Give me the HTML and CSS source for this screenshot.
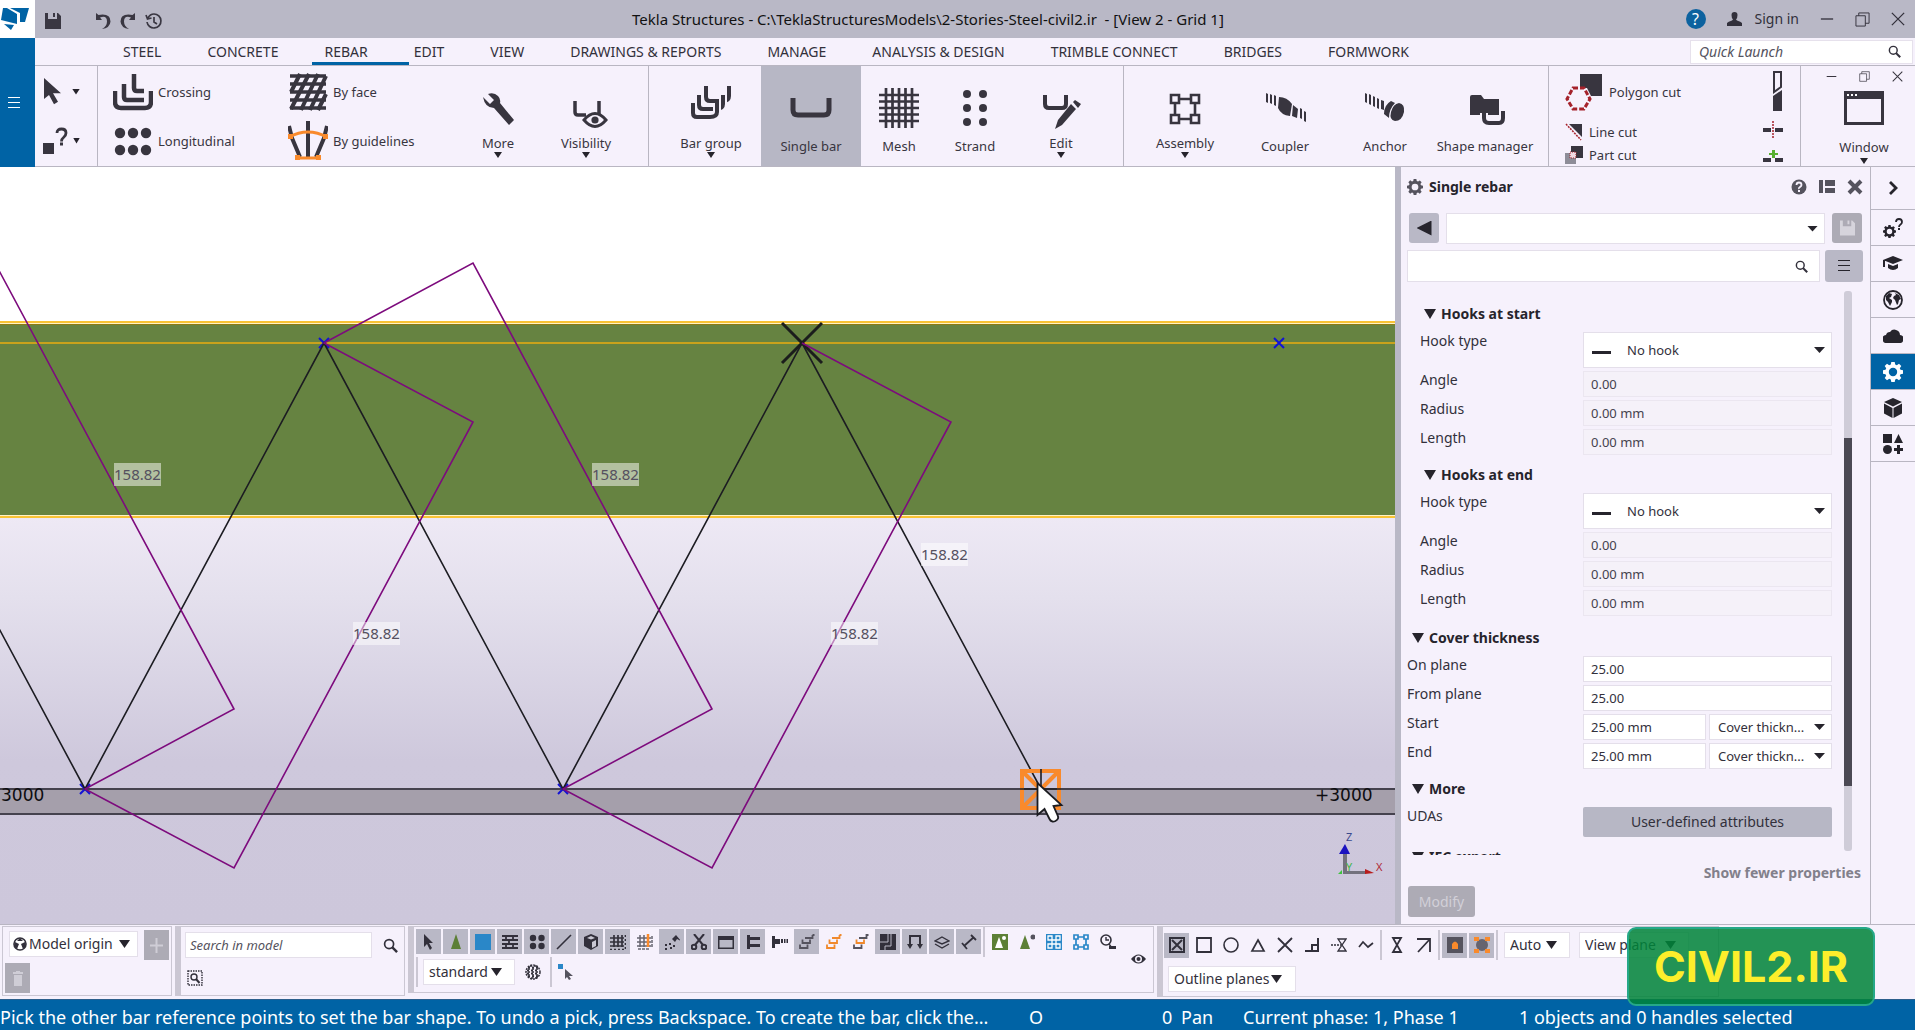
FILE: index.html
```html
<!DOCTYPE html>
<html lang="en">
<head>
<meta charset="utf-8">
<title>Tekla Structures</title>
<link rel="stylesheet" href="styles.css">
</head>
<body>
<svg class="sprite" aria-hidden="true">
  <symbol id="i-floppy" viewBox="0 0 16 16"><path d="M0 0h3v6h9V0h1l3 3v13H0zM8 0h2v4H8z"/></symbol>
  <symbol id="i-search" viewBox="0 0 16 16"><circle cx="6.500" cy="6.500" r="4.800" fill="none" stroke="currentColor" stroke-width="1.800"/><path d="M10 10l5 5" stroke="currentColor" stroke-width="2.600"/></symbol>
  <symbol id="i-cursor" viewBox="0 0 20 32"><path d="M1 0l17 18h-8l5 10-4 3-5-11-5 5z"/></symbol>
  <symbol id="i-restore" viewBox="0 0 16 16"><path d="M1 4h10v11H1zM4 4V1h11v11h-4" fill="none" stroke="currentColor"/></symbol>
  <symbol id="i-close" viewBox="0 0 16 16"><path d="M1 1l14 14M15 1L1 15" fill="none" stroke="currentColor" stroke-width="1.500"/></symbol>
  <symbol id="i-min" viewBox="0 0 16 16"><path d="M1 8h14" stroke="currentColor" stroke-width="1.500"/></symbol>
  <symbol id="i-gear" viewBox="0 0 20 20"><path fill-rule="evenodd" d="M8.300 0h3.400l.5 2.500 1.600.7L16 1.800 18.300 4l-1.500 2.200.7 1.600 2.500.5v3.400l-2.500.5-.7 1.600 1.500 2.200-2.300 2.300-2.200-1.500-1.600.7-.5 2.500H8.300l-.5-2.500-1.600-.7L4 18.300 1.700 16l1.500-2.200-.7-1.600-2.500-.5V8.300l2.500-.5.7-1.600L1.700 4 4 1.700l2.200 1.500 1.600-.7zM10 5.800a4.200 4.200 0 100 8.400 4.200 4.200 0 000-8.400z"/></symbol>
  <symbol id="i-hooks" viewBox="0 0 16 16"><path d="M6 4h7.500V1M3.500 5.500V9H11V5.500M1 10.500V14h7.500v-3.500M15.500 1h-2" fill="none" stroke="currentColor" stroke-width="1.800"/></symbol>
</svg>

<header class="titlebar">
  <div class="logo"><svg width="35" height="38" viewBox="0 0 35 38"><path d="M3 8h4l10 6v10L1 20zM10 8h19l-4 14h-5V13zM4 24l10 1-3 5z" fill="#0063a5"/></svg></div>
  <div class="quick">
    <button aria-label="Save"><svg width="16" height="16"><use href="#i-floppy"/></svg></button>
    <button class="undo" aria-label="Undo"><svg width="16" height="18" viewBox="0 0 16 18"><path d="M1 1v7h6L5 5.500Q12 3 12 9.500 12 14 7 17q8-1 8.500-7.500Q15.500 1 3.500 3z"/></svg></button>
    <button aria-label="Redo"><svg width="16" height="18" viewBox="0 0 16 18"><path d="M15 1v7H9l2-2.500Q4 3 4 9.500 4 14 9 17 1 16 .5 9.500.5 1 12.500 3z"/></svg></button>
    <button aria-label="History"><svg width="18" height="18" viewBox="0 0 18 18" fill="none" stroke="currentColor" stroke-width="1.700"><path d="M2 10A7 7 0 109 2Q5 2 3 6M9 5v5l3 2M1 3l1.500 4 4-1"/></svg></button>
  </div>
  <h1>Tekla Structures - C:\TeklaStructuresModels\2-Stories-Steel-civil2.ir &nbsp;- [View 2 - Grid 1]</h1>
  <div class="account">
    <button class="help" aria-label="Help">?</button>
    <a href="#signin"><svg width="15" height="14" viewBox="0 0 15 14"><path d="M4.500 3a3 3 0 016 0q0 3-1.500 4.500l1 1q4 1 5 2.500v3H0v-3q1-1.500 5-2.500l1-1Q4.500 6 4.500 3z"/></svg>Sign in</a>
    <button aria-label="Minimize"><svg width="14" height="14"><use href="#i-min"/></svg></button>
    <button aria-label="Restore"><svg width="15" height="15"><use href="#i-restore"/></svg></button>
    <button aria-label="Close"><svg width="14" height="14"><use href="#i-close"/></svg></button>
  </div>
</header>

<div class="top">
  <button class="appmenu" aria-label="Menu"><span class="bars"></span></button>
  <nav class="tabs">
    <a href="#steel">STEEL</a><a href="#concrete">CONCRETE</a><a href="#rebar" class="current">REBAR</a><a href="#edit">EDIT</a><a href="#view">VIEW</a><a href="#drawings">DRAWINGS &amp; REPORTS</a><a href="#manage">MANAGE</a><a href="#analysis">ANALYSIS &amp; DESIGN</a><a href="#trimble">TRIMBLE CONNECT</a><a href="#bridges">BRIDGES</a><a href="#formwork">FORMWORK</a>
    <label class="launch"><input type="text" placeholder="Quick Launch" aria-label="Quick Launch"><svg width="13" height="13"><use href="#i-search"/></svg></label>
  </nav>
  <div class="ribbon">
    <section class="tools">
      <button aria-label="Select"><svg width="20" height="27" viewBox="0 0 20 32" preserveAspectRatio="none"><use href="#i-cursor"/></svg><i class="tri"></i></button>
      <button aria-label="Inquire"><svg width="26" height="27" viewBox="0 0 26 27"><path d="M0 16h11v11H0z"/><path d="M14 6q0-4 4.500-4T23 6q0 2.500-2.500 4.500-2 1.500-2 4" fill="none" stroke="currentColor" stroke-width="2.800"/><path d="M17 15.500h3v3h-3z"/></svg><i class="tri"></i></button>
    </section>
    <section class="sets">
      <div class="wide-col">
        <button class="wide"><svg width="40" height="40" viewBox="0 0 40 40" fill="none" stroke="currentColor" stroke-width="4.500"><path d="M2 19v11q0 6 6 6h24q6 0 6-6V19"/><path d="M11 12v13q0 3 3 3h17"/><path d="M21 2v14q0 3 3 3h7"/></svg>Crossing</button>
        <button class="wide"><svg width="40" height="40" viewBox="0 0 40 40"><circle cx="7" cy="12" r="5.200"/><circle cx="20" cy="12" r="5.200"/><circle cx="33" cy="12" r="5.200"/><circle cx="7" cy="29" r="5.200"/><circle cx="20" cy="29" r="5.200"/><circle cx="33" cy="29" r="5.200"/></svg>Longitudinal</button>
      </div>
      <div class="wide-col">
        <button class="wide"><svg width="40" height="40" viewBox="0 0 40 40" fill="none" stroke="currentColor" stroke-width="3.600"><path d="M2 4h36M2 12h36M2 20h36M2 28h36M2 36h36"/><path d="M12 2L3 20M21 2L3 37M30 2L13 38M38 4L22 38M38 22l-8 16" stroke-width="4"/></svg>By face</button>
        <button class="wide"><svg width="40" height="40" viewBox="0 0 40 40" fill="none"><path d="M20 0v38M1 5l3 12 8 19M39 5l-3 12-8 19" stroke="currentColor" stroke-width="4"/><path d="M1 16q19-10 38 0M8 37h24" stroke="#f98a2c" stroke-width="3"/><path d="M0 13h5v5H0zM35 13h5v5h-5zM7 34h5v5H7zM28 34h5v5h-5z" fill="#f98a2c"/></svg>By guidelines</button>
      </div>
      <button class="big arrow"><svg viewBox="0 0 44 44"><path d="M7 11l7 7 4-4-6-6q6-2 10 2 3 3 2 7l14 17-5 5-15-17q-9 0-11-11z"/></svg>More<i class="tri"></i></button>
      <button class="big arrow"><svg viewBox="0 0 44 44"><path d="M11 15v11q0 3 3 3h8M35 15v14" fill="none" stroke="currentColor" stroke-width="3.500"/><path d="M20 34q11-13 22 0-11 13-22 0z" fill="#f6f1fc" stroke="currentColor" stroke-width="3"/><circle cx="31" cy="34" r="3.600"/></svg>Visibility<i class="tri"></i></button>
    </section>
    <section class="bars-group">
      <button class="big arrow"><svg viewBox="0 0 44 44" fill="none"><path d="M17 0v11q0 4 4 4h13q6 0 6-5V0" stroke="currentColor" stroke-width="4"/><path d="M10 9v10q0 4 4 4h13q7 0 7-5V9" stroke="#f6f1fc" stroke-width="8"/><path d="M10 9v10q0 4 4 4h13q7 0 7-5V9" stroke="currentColor" stroke-width="4"/><path d="M4 17v10q0 4 4 4h13q7 0 7-5v-9" stroke="#f6f1fc" stroke-width="8"/><path d="M4 17v10q0 4 4 4h13q7 0 7-5v-9" stroke="currentColor" stroke-width="4"/></svg>Bar group<i class="tri"></i></button>
      <button class="big pressed"><svg viewBox="0 0 44 44"><path d="M4 12v12q0 5 5 5h26q5 0 5-5V12" fill="none" stroke="currentColor" stroke-width="5"/></svg>Single bar</button>
      <button class="big narrow"><svg viewBox="0 0 44 44" fill="none" stroke="currentColor" stroke-width="2.700"><path d="M9 2v40M15.500 2v40M22 2v40M28.500 2v40M35 2v40M2 9h40M2 15.500h40M2 22h40M2 28.500h40M2 35h40"/></svg>Mesh</button>
      <button class="big narrow"><svg viewBox="0 0 44 44"><circle cx="14" cy="8" r="4"/><circle cx="30" cy="8" r="4"/><circle cx="14" cy="22" r="4"/><circle cx="30" cy="22" r="4"/><circle cx="14" cy="36" r="4"/><circle cx="30" cy="36" r="4"/></svg>Strand</button>
      <button class="big arrow"><svg viewBox="0 0 44 44"><path d="M6 9v9q0 4 4 4h13q4 0 4-4V9" fill="none" stroke="currentColor" stroke-width="4"/><path d="M32 18l5 5-14 16-7 4 3-9zM34 16l2-2 6 4-3 4z"/></svg>Edit<i class="tri"></i></button>
    </section>
    <section class="detail">
      <button class="big arrow"><svg viewBox="0 0 44 44" fill="none" stroke="currentColor" stroke-width="2.600"><path d="M8 9h8v8H8zM28 9h8v8h-8zM8 29h8v8H8zM28 29h8v8h-8zM16 13h12M16 33h12M12 17v12M32 17v12"/></svg>Assembly<i class="tri"></i></button>
      <button class="big"><svg viewBox="0 0 44 44"><path d="M3 7l2 1v9l-2-1zM7 8l2 1v9l-2-1zM11 9l2 1v10l-2-1zM16 11q8 0 13 7l-2 12q-9-1-12-8zM30 19l5 4-1 9-5-2zM37 22l2 1v10l-2-1zM41 25l2 1v10l-2-1z"/></svg>Coupler</button>
      <button class="big"><svg viewBox="0 0 44 44"><path d="M2 7l2 1v9l-2-1zM6 8l2 1v10l-2-1zM10 10l2 1v10l-2-1zM14 12l2 1v10l-2-1zM18 14l3 1v9l-3-1zM28 15q-7 4-7 13l5 4q0-9 6-15zM36 17q6 1 5 9-2 9-9 9-6-1-4-9 2-8 8-9z"/></svg>Anchor</button>
      <button class="big"><svg viewBox="0 0 44 44"><path d="M7 11q0-2 2-2h9l3 4h15v16H7z"/><path d="M21 27v5q0 5 5 5h10q5 0 5-5v-5" fill="none" stroke="#f6f1fc" stroke-width="8"/><path d="M21 25v7q0 5 5 5h10q4 0 4-5v-7" fill="none" stroke="currentColor" stroke-width="4"/></svg>Shape manager</button>
    </section>
    <section class="cuts">
      <div class="cut-list">
        <button class="poly"><svg width="38" height="38" viewBox="0 0 38 38"><path d="M15 1h22v22H26l-4-8h-7z"/><path d="M8 15h11l6 11-6 10H8L2 26z" fill="none" stroke="#a5222b" stroke-width="3" stroke-dasharray="5 2"/></svg>Polygon cut</button>
        <button class="small"><svg width="18" height="18" viewBox="0 0 18 18"><path d="M4 1h13v13z"/><path d="M1 1l15 16" stroke="#a5222b" stroke-width="1.500" stroke-dasharray="2 1"/></svg>Line cut</button>
        <button class="small"><svg width="18" height="18" viewBox="0 0 18 18"><path d="M0 7h11v11H0z" fill="#8e8d98"/><path d="M6 0h12v12H6z"/><path d="M5 6h6v6H5z" fill="#f1dbe3" stroke="#a5222b" stroke-dasharray="1 1"/></svg>Part cut</button>
      </div>
      <div class="cut-icons">
        <button aria-label="Fitting"><svg width="10" height="40" viewBox="0 0 10 40"><path d="M1 1h7v15l-7 5z" fill="none" stroke="currentColor" stroke-width="2"/><path d="M0 25l9-6v21H0z"/></svg></button>
        <button aria-label="Split"><svg width="20" height="18" viewBox="0 0 20 18"><path d="M0 7h8v4H0zM12 7h8v4h-8z"/><path d="M10 0v18" stroke="#a5222b" stroke-width="1.500" stroke-dasharray="2 1"/></svg></button>
        <button aria-label="Combine"><svg width="20" height="14" viewBox="0 0 20 14"><path d="M0 9h8v4H0zM12 9h8v4h-8z"/><path d="M9 1h3v3h3v2h-3v3H9V6H6V4h3z" fill="#58b030"/></svg></button>
      </div>
    </section>
    <section class="window">
      <div class="mdi"><button aria-label="Minimize view"><svg width="11" height="11"><use href="#i-min"/></svg></button><button aria-label="Restore view"><svg width="11" height="11"><use href="#i-restore"/></svg></button><button aria-label="Close view"><svg width="11" height="11"><use href="#i-close"/></svg></button></div>
      <button class="big arrow"><svg viewBox="0 0 44 36"><path fill-rule="evenodd" d="M2 1h40v34H2zM5 9v23h34V9z"/><path d="M5 4h2v2H5zM9 4h2v2H9zM13 4h2v2h-2z" fill="#fff"/></svg>Window<i class="tri"></i></button>
    </section>
  </div>
</div>

<main class="work">
  <div class="view">
    <svg class="model" viewBox="0 167 1395 757" preserveAspectRatio="xMinYMin slice">
      <defs><linearGradient id="haze" x1="0" y1="0" x2="0" y2="1"><stop offset="0" stop-color="#eee9f5"/><stop offset=".2" stop-color="#e4e0ed"/><stop offset=".6" stop-color="#cec8dc"/><stop offset="1" stop-color="#cdc7db"/></linearGradient></defs>
      <path d="M0 167h1395v156H0z" fill="#fff"/>
      <path d="M0 516h1395v408H0z" fill="url(#haze)"/>
      <path d="M0 324h1395v191H0z" fill="#668341"/>
      <path d="M0 322.500h1395M0 516.500h1395" stroke="#f8c334" stroke-width="3"/>
      <path d="M0 323.500h1395M0 515.500h1395" stroke="#fff3c4"/>
      <path d="M0 324.500h1395" stroke="#8c7a14"/>
      <path d="M0 343h1395" stroke="#c9a21c" stroke-width="2"/>
      <path d="M0 789h1395v25H0z" fill="#a59fab"/>
      <path d="M0 789h1395M0 814h1395" stroke="#45424e" stroke-width="2"/>
      <path d="M80 784l10 10M90 784l-10 10M558 784l10 10M568 784l-10 10M319 338l10 10M329 338l-10 10M1274 338l10 10M1284 338l-10 10" stroke="#1212d6" stroke-width="2"/>
      <path d="M782 323l40 40M822 323l-40 40" stroke="#1b1d1c" stroke-width="3"/>
      <path d="M-154 343L85 789 324 343 563 789 802 343l239 446" fill="none" stroke="#1c1c22" stroke-width="1.600"/>
      <path d="M-154 343L-5 263 234 709 85 789 234 868 473 422 324 343 473 263 712 709 563 789 712 868 951 422 802 343" fill="none" stroke="#7d0b7d" stroke-width="1.600"/>
      <g fill="#fff" fill-opacity=".5"><path d="M114 463h47v23h-47zM592 463h47v23h-47zM353 622h47v23h-47zM831 622h47v23h-47zM921 543h47v23h-47z"/></g>
      <g class="dim"><text x="114" y="480">158.82</text><text x="592" y="480">158.82</text><text x="353" y="639">158.82</text><text x="831" y="639">158.82</text><text x="921" y="560">158.82</text></g>
      <g class="level"><text x="1" y="801">3000</text><text x="1315" y="801">+3000</text></g>
      <path d="M1022 771h37v37h-37zM1022 771l37 37M1059 771l-37 37" fill="none" stroke="#f98a2c" stroke-width="4"/>
      <path d="M1041 769v20M1020 789h41" stroke="#1c1c22" stroke-width="1.600"/>
      <path d="M1037.500 783v32l7-6 5 10q2 4 6 2t2-6l-4-9 8-1z" fill="#fff" stroke="#1b1b20" stroke-width="1.800"/>
      <path d="M1343 853h4v20h-4z" fill="#73717d"/><path d="M1343 871h23v3h-23z" fill="#73717d"/>
      <path d="M1339 854l6-10 5 10z" fill="#1a12c0"/><path d="M1365 869l9 4-9 1z" fill="#b81c1c"/><path d="M1338 874l4-4v4z" fill="#3ec43e"/>
      <g class="axis"><text x="1346" y="841" fill="#3c4a8c">Z</text><text x="1376" y="871" fill="#b02a35">X</text><text x="1346" y="871" fill="#45b548">Y</text></g>
    </svg>
  </div>

  <aside class="panel">
    <header>
      <svg width="16" height="16"><use href="#i-gear"/></svg><h2>Single rebar</h2>
      <button aria-label="Help"><svg width="16" height="16" viewBox="0 0 16 16"><circle cx="8" cy="8" r="7.500"/><path d="M5.500 6q0-2.500 2.500-2.500T10.500 6Q10.500 7 9 8T8 10" fill="none" stroke="#f6f1fc" stroke-width="1.800"/><path d="M7 11h2v2H7z" fill="#f6f1fc"/></svg></button>
      <button aria-label="Layout"><svg width="16" height="14" viewBox="0 0 16 14"><path d="M0 0h4v13H0zM6 0h10v6H6zM6 8h10v5H6z"/></svg></button>
      <button aria-label="Close panel"><svg width="16" height="16" viewBox="0 0 16 16"><path d="M2 2l12 12M14 2L2 14" stroke="currentColor" stroke-width="4"/></svg></button>
    </header>
    <div class="row saved">
      <button class="chip back" aria-label="Back"><i></i></button>
      <span class="select"><select aria-label="Saved properties"><option></option></select></span>
      <button class="chip save" aria-label="Save properties" disabled><svg width="15" height="16"><use href="#i-floppy"/></svg></button>
    </div>
    <div class="row find">
      <label class="findbox"><input type="text" aria-label="Search properties"><svg width="13" height="13"><use href="#i-search"/></svg></label>
      <button class="chip" aria-label="Options"><span class="bars"></span></button>
    </div>
    <div class="scroll">
      <div class="props">
        <fieldset class="inner">
          <legend><i class="fold"></i>Hooks at start</legend>
          <label for="hs">Hook type</label><span class="select hook"><select id="hs"><option>No hook</option></select></span>
          <label for="a1">Angle</label><input id="a1" value="0.00" disabled>
          <label for="r1">Radius</label><input id="r1" value="0.00 mm" disabled>
          <label for="l1">Length</label><input id="l1" value="0.00 mm" disabled>
        </fieldset>
        <fieldset class="inner">
          <legend><i class="fold"></i>Hooks at end</legend>
          <label for="he">Hook type</label><span class="select hook"><select id="he"><option>No hook</option></select></span>
          <label for="a2">Angle</label><input id="a2" value="0.00" disabled>
          <label for="r2">Radius</label><input id="r2" value="0.00 mm" disabled>
          <label for="l2">Length</label><input id="l2" value="0.00 mm" disabled>
        </fieldset>
        <fieldset>
          <legend><i class="fold"></i>Cover thickness</legend>
          <label for="op">On plane</label><input id="op" value="25.00">
          <label for="fp">From plane</label><input id="fp" value="25.00">
          <label for="st">Start</label><span class="pair"><input id="st" value="25.00 mm"><span class="select"><select aria-label="Start type"><option>Cover thickn...</option></select></span></span>
          <label for="en">End</label><span class="pair"><input id="en" value="25.00 mm"><span class="select"><select aria-label="End type"><option>Cover thickn...</option></select></span></span>
        </fieldset>
        <fieldset>
          <legend><i class="fold"></i>More</legend>
          <label for="uda">UDAs</label><button id="uda" class="uda">User-defined attributes</button>
        </fieldset>
        <fieldset>
          <legend><i class="fold"></i>IFC export</legend>
        </fieldset>
      </div>
      <div class="track"><div class="thumb"></div></div>
    </div>
    <footer><a href="#fewer">Show fewer properties</a><button disabled>Modify</button></footer>
  </aside>

  <nav class="rail">
    <button aria-label="Expand"><svg width="11" height="14" viewBox="0 0 11 14"><path d="M2 1l6 6-6 6" fill="none" stroke="currentColor" stroke-width="2.800"/></svg></button>
    <button aria-label="Inquire settings"><svg width="20" height="20" viewBox="0 0 20 20"><use href="#i-gear" y="7" width="13" height="13"/><path d="M13 4q0-3 3-3t3 3q0 1.500-1.500 2.500T16 9" fill="none" stroke="currentColor" stroke-width="1.800"/><path d="M15 10h2v2h-2z"/></svg></button>
    <button aria-label="Learning"><svg width="20" height="16" viewBox="0 0 20 16"><path d="M10 0l10 4-10 4L0 4zM5 8l5 2 5-2v4q-5 4-10 0zM0 4h2v7H0z"/></svg></button>
    <button aria-label="Web"><svg width="20" height="20" viewBox="0 0 20 20"><circle cx="10" cy="10" r="9" fill="none" stroke="currentColor" stroke-width="1.800"/><path d="M3 6l3-3 3 1-1 3-2 1 3 2v2l-2 4-2-4-2-2zM12 3l4 2 2 4-2 1-1 4-1 1-2-5-2-2 1-2 2-1z"/></svg></button>
    <button aria-label="Cloud"><svg width="20" height="14" viewBox="0 0 20 14"><path d="M4 14a4 4 0 01-1-8 4 4 0 014-3 5.500 5.500 0 0110 3 4 4 0 01-1 8z"/></svg></button>
    <button class="on" aria-label="Properties"><svg width="20" height="20"><use href="#i-gear"/></svg></button>
    <button aria-label="Components"><svg width="20" height="20" viewBox="0 0 20 20"><path d="M10 0l9 4-9 4.500L1 4zM1 5.500l8.500 4.500v10L1 15.500zM19 5.500L10.500 10v10l8.500-4.500z"/></svg></button>
    <button aria-label="Shapes"><svg width="20" height="20" viewBox="0 0 20 20"><path d="M0 0h9v9H0zM15.500 0l4.500 9h-9zM14 11h3v3h3v3h-3v3h-3v-3h-3v-3h3z"/><circle cx="4.500" cy="15.500" r="4.500"/></svg></button>
  </nav>
</main>

<div class="dock">
  <section class="origin">
    <span class="select"><svg width="14" height="14" viewBox="0 0 14 14"><circle cx="7" cy="7" r="6" fill="none" stroke="currentColor" stroke-width="1.600"/><path d="M2 5l4 2-2 5-3-3zM12 5L8 7l2 5 3-3zM7 1l3 3H4z"/></svg><select aria-label="Origin"><option>Model origin</option></select></span>
    <button class="off" aria-label="Add"><svg width="13" height="15" viewBox="0 0 13 15"><path d="M6.500 0v15M0 7.500h13" stroke="currentColor" stroke-width="2"/></svg></button>
    <button class="off" aria-label="Delete"><svg width="10" height="15" viewBox="0 0 10 15"><path d="M0 1h3V0h4v1h3v2H0zM1 4h8v11H1z"/></svg></button>
  </section>
  <section class="finder">
    <input type="text" placeholder="Search in model" aria-label="Search in model">
    <button aria-label="Search"><svg width="15" height="15"><use href="#i-search"/></svg></button>
    <button class="area" aria-label="Search area"><svg width="16" height="16" viewBox="0 0 16 16"><path d="M1 1h14v14H1z" fill="none" stroke="currentColor" stroke-width="1.400" stroke-dasharray="1.500 1"/><circle cx="7" cy="7" r="3" fill="none" stroke="currentColor" stroke-width="1.400"/><path d="M9 9l3.500 4" stroke="currentColor" stroke-width="2"/></svg></button>
  </section>
  <section class="selecting">
    <div class="strip">
      <button class="on" aria-label="Select all"><svg viewBox="0 0 16 16"><path d="M3 0l9 9H8l3 5-2 2-3-6-3 3z"/></svg></button>
      <button class="on" aria-label="Components"><svg viewBox="0 0 16 16"><path d="M8 0l5 15H3z" fill="#5c7f36"/></svg></button>
      <button class="on" aria-label="Parts"><svg viewBox="0 0 16 16"><path d="M0 0h16v16H0z" fill="#2a87c8"/></svg></button>
      <button class="on" aria-label="Surfaces"><svg viewBox="0 0 16 16"><path d="M0 2h16M0 6h16M0 10h16M0 14h16M4 2v4M11 2v4M7 6v4M4 10v4M11 10v4" stroke="currentColor" stroke-width="1.800"/></svg></button>
      <button class="on" aria-label="Points"><svg viewBox="0 0 16 16"><circle cx="4" cy="4" r="3.200"/><circle cx="12.500" cy="4" r="3.200"/><circle cx="4" cy="12" r="3.200"/><circle cx="12.500" cy="12" r="3.200"/></svg></button>
      <button class="on" aria-label="Lines"><svg viewBox="0 0 16 16"><path d="M1 15L15 1" stroke="currentColor" stroke-width="1.600"/></svg></button>
      <button class="on" aria-label="Solids"><svg viewBox="0 0 16 16"><path d="M8 0l7 3v9l-7 4-7-4V3z"/><path d="M9 8l4-2v6l-4 2zM4 4l4-2 4 2-4 1.500z" fill="#c9c8d3"/></svg></button>
      <button class="on" aria-label="Grid"><svg viewBox="0 0 16 16" stroke="currentColor" stroke-width="1.700"><path d="M4 1v12M8 1v12M12 1v12M0 4h14M0 8h14M0 12h14"/><path d="M0 15.500h16M15.500 1v14" stroke-dasharray="2 2"/></svg></button>
      <button aria-label="Grid line"><svg viewBox="0 0 16 16" fill="none" stroke="#66646f" stroke-width="1.500"><path d="M3 1v12M7 1v12M0 4h14M0 8h14M0 12h14"/><path d="M15 2v12M1 15h12" stroke-dasharray="3 1"/><path d="M11 0v13" stroke="#f98a2c" stroke-width="2.500"/></svg></button>
      <button class="on" aria-label="Welds"><svg viewBox="0 0 16 16"><path d="M8 5l4-4 5 6-4-2-2 3zM1 10h2v2H1zM5 9h2v2H5zM1 14h2v2H1zM6 13h2v2H6zM9 11h2v2H9z"/></svg></button>
      <button class="on" aria-label="Cuts"><svg viewBox="0 0 16 16" fill="none" stroke="currentColor" stroke-width="2"><path d="M3 0l9 11M13 0L4 11"/><circle cx="3" cy="13" r="2.300"/><circle cx="13" cy="13" r="2.300"/></svg></button>
      <button class="on" aria-label="Views"><svg viewBox="0 0 16 16"><path fill-rule="evenodd" d="M0 2h16v13H0zM1.500 6v7.500h13V6z"/></svg></button>
      <button class="on" aria-label="Fittings"><svg viewBox="0 0 16 16"><path d="M2 1h3v2h10v3H5v4h10v3H5v2H2z"/></svg></button>
      <button aria-label="Bolts"><svg viewBox="0 0 16 16"><path d="M0 2h3v3h5v5H3v4H0zM9 5h2v4H9zM12 5h1.500v4H12zM14.500 5H16v4h-1.500z"/></svg></button>
      <button class="on gray" aria-label="Rebar"><svg viewBox="0 0 16 16"><use href="#i-hooks"/></svg></button>
      <button class="orange" aria-label="Rebar group"><svg viewBox="0 0 16 16"><use href="#i-hooks"/></svg></button>
      <button class="gray" aria-label="Single rebars"><svg viewBox="0 0 16 16" fill="none" stroke="currentColor" stroke-width="1.800"><path d="M6 4h7.500V1h2M1 10.500V14h7.500v-3.500"/><path d="M3.500 5.500V9H11V5.500" stroke="#f0892c"/></svg></button>
      <button class="on" aria-label="Pour"><svg viewBox="0 0 16 16"><path d="M0 0h16v16H0z"/><path d="M0 8h8V0M5 16v-4h6V0" fill="none" stroke="#b9b8c6"/></svg></button>
      <button class="on" aria-label="Loads"><svg viewBox="0 0 16 16"><path d="M3 12V2h10v10" fill="none" stroke="currentColor" stroke-width="2"/><path d="M0 10h6l-3 5zM10 10h6l-3 5z"/></svg></button>
      <button class="on" aria-label="Planes"><svg viewBox="0 0 16 16" fill="none" stroke="currentColor" stroke-width="1.400"><path d="M8 3l7 4-7 3-7-3zM1 10l7 4 7-4"/></svg></button>
      <button class="on" aria-label="Distances"><svg viewBox="0 0 16 16" fill="none" stroke="currentColor" stroke-width="1.800"><path d="M3 12L13 3M1 9l5 6M10 1l5 5"/></svg></button>
      <span class="rule"></span>
      <button aria-label="Component filter"><svg viewBox="0 0 16 16"><path d="M0 0h16v16H0z" fill="#5c7f36"/><path d="M7 3l4 11H3z" fill="#fff"/><circle cx="12" cy="4" r="2" fill="#fff"/></svg></button>
      <button aria-label="Object filter"><svg viewBox="0 0 16 16"><path d="M6 1l5 14H1z" fill="#5c7f36"/><circle cx="14" cy="3" r="2.500" fill="#55535e"/></svg></button>
      <button class="blue" aria-label="Assemblies"><svg viewBox="0 0 16 16"><path d="M0 0h16v16H0z"/><path d="M2 2h4v4H2zM10 2h4v4h-4zM2 10h4v4H2zM10 10h4v4h-4zM6 6h4v4H6z" fill="none" stroke="#fff" stroke-width="1.300"/></svg></button>
      <button class="blue" aria-label="Assembly parts"><svg viewBox="0 0 16 16" fill="none" stroke="currentColor" stroke-width="1.700"><path d="M1 1h4v4H1zM11 1h4v4h-4zM1 11h4v4H1zM11 11h4v4h-4zM5 3h6M5 13h6M3 5v6M13 5v6"/></svg></button>
      <button aria-label="Task search"><svg viewBox="0 0 16 16"><circle cx="6" cy="6" r="5" fill="none" stroke="currentColor" stroke-width="1.600"/><path d="M6 3v3h3M9 10l3 4" fill="none" stroke="currentColor" stroke-width="1.400"/><path d="M9 12h7v3H9z"/></svg></button>
    </div>
    <div class="strip second">
      <span class="rule"></span>
      <span class="select"><select aria-label="Selection filter"><option>standard</option></select></span>
      <button aria-label="Filter"><svg viewBox="0 0 16 16" fill="none" stroke="currentColor"><circle cx="8" cy="8" r="7" stroke-width="1.500" stroke-dasharray="2 1"/><path d="M3 3.500h10M2 6.500h12M2 9.500h12M3 12.500h10" stroke-width="2" stroke-dasharray="2 2"/><path d="M5 2h8M3 5h12M3 8h12M3 11h12M6 14h6" stroke-width="1.500" stroke-dasharray="2 2"/></svg></button>
      <span class="rule"></span>
      <button aria-label="Direct modification"><svg viewBox="0 0 16 16"><path d="M0 0h5v5H0z" fill="#2a87c8"/><path d="M7 5l8 7h-4l2 3-2 1-2-3-2 2z" fill="#55535e"/></svg></button>
    </div>
    <button class="eye" aria-label="Visibility"><svg width="15" height="10" viewBox="0 0 15 10"><path fill-rule="evenodd" d="M0 5q7.500-9 15 0-7.500 9-15 0zM7.500 1.500a3.500 3.500 0 100 7 3.500 3.500 0 000-7z"/><circle cx="7.500" cy="5" r="2"/></svg></button>
  </section>
  <section class="snapping">
    <div class="strip">
      <button class="on" aria-label="Snap points"><svg viewBox="0 0 16 16" fill="none" stroke="currentColor" stroke-width="2"><path d="M1 1h14v14H1zM3 3l10 10M13 3L3 13"/></svg></button>
      <button aria-label="End points"><svg viewBox="0 0 16 16" fill="none" stroke="currentColor" stroke-width="1.800"><path d="M1 1h14v14H1z"/></svg></button>
      <button aria-label="Centers"><svg viewBox="0 0 16 16" fill="none" stroke="currentColor" stroke-width="1.600"><circle cx="8" cy="8" r="7"/></svg></button>
      <button aria-label="Midpoints"><svg viewBox="0 0 16 16" fill="none" stroke="currentColor" stroke-width="1.700"><path d="M8 3l6 11H2z"/></svg></button>
      <button aria-label="Intersections"><svg viewBox="0 0 16 16" fill="none" stroke="currentColor" stroke-width="1.800"><path d="M1 1l14 14M15 1L1 15"/></svg></button>
      <button aria-label="Perpendicular"><svg viewBox="0 0 16 16" fill="none" stroke="currentColor" stroke-width="2"><path d="M14 1v13H1M8 14V8h6"/></svg></button>
      <button aria-label="Extensions"><svg viewBox="0 0 16 16" fill="none" stroke="currentColor" stroke-width="1.300"><path d="M7 2h8L7 14h8z"/><path d="M0 8h10" stroke-dasharray="2 1"/></svg></button>
      <button aria-label="Any position"><svg viewBox="0 0 16 16" fill="none" stroke="currentColor" stroke-width="1.700"><path d="M1 10l4-5 5 5 5-4"/></svg></button>
      <span class="rule"></span>
      <button aria-label="Nearest"><svg viewBox="0 0 16 16" fill="none" stroke="currentColor" stroke-width="1.800"><path d="M4 1h8L4 15h8z"/></svg></button>
      <button aria-label="Lines"><svg viewBox="0 0 16 16" fill="none" stroke="currentColor" stroke-width="1.800"><path d="M1 2h13v13M14 2L2 15"/></svg></button>
      <span class="rule"></span>
      <button class="on" aria-label="Reference"><svg viewBox="0 0 16 16"><path d="M0 0h16v16H0z" fill="#55535e"/><path d="M5 12V7q3-5 6 0v5z" fill="#f98a2c"/></svg></button>
      <button class="on" aria-label="Geometry"><svg viewBox="0 0 16 16"><circle cx="8" cy="8" r="6" fill="#66646f"/><path d="M0 0h5v4H0zM11 0h5v4h-5zM0 12h5v4H0zM11 12h5v4h-5z" fill="#f98a2c"/></svg></button>
      <span class="rule"></span>
      <span class="select auto"><select aria-label="Depth"><option>Auto</option></select></span>
      <span class="select plane"><select aria-label="Plane"><option>View plane</option></select></span>
    </div>
    <span class="select outline"><select aria-label="Outline"><option>Outline planes</option></select></span>
  </section>
  <div class="badge">CIVIL2.IR</div>
</div>

<footer class="status"><span>Pick the other bar reference points to set the bar shape. To undo a pick, press Backspace. To create the bar, click the...</span><span>O</span><span>0</span><span>Pan</span><span>Current phase: 1, Phase 1</span><span>1 objects and 0 handles selected</span></footer>
</body>
</html>
```
FILE: styles.css
```css
* { box-sizing: border-box; }
body {
  margin: 0;
  height: 100vh;
  display: grid;
  grid-template-rows: 38px 129px minmax(0, 1fr) 75px 31px;
  overflow: hidden;
  background: #f6f1fc;
  color: #32303b;
  fill: currentColor;
  font: 13px/18px "Noto Sans", "Open Sans", sans-serif;
}
button, input, select { font: inherit; color: inherit; margin: 0; }
button { border: 0; padding: 0; background: none; }
a { color: inherit; text-decoration: none; }
svg { display: block; flex: none; }
.sprite { position: absolute; width: 0; height: 0; }
h1, h2 { margin: 0; }

.tri { display: block; width: 8px; height: 6px; background: #26242c; clip-path: polygon(0 0, 100% 0, 50% 100%); }
.bars { display: block; width: 12px; height: 12px; background: repeating-linear-gradient(currentColor 0 1px, transparent 1px 5px); }

/* title bar */
.titlebar { display: grid; grid-template-columns: 35px 597px 1fr auto; align-items: center; background: #b9b8c6; }
.logo { background: #fff; height: 38px; }
.quick { display: flex; align-items: center; gap: 9px; padding: 4px 0 0 10px; color: #3a3742; }
.quick .undo { margin-left: 25px; }
h1 { font-size: 15px; line-height: 20px; font-weight: 400; color: #111; }
.account { display: flex; align-items: center; gap: 21px; padding-right: 10px; font-size: 14px; }
.account a { display: flex; align-items: center; gap: 13px; }
.help { width: 20px; height: 20px; border-radius: 50%; background: #0d629f; color: #fff; font-size: 16px; line-height: 20px; }

/* tabs and ribbon */
.top { display: grid; grid-template: 28px 101px / 35px minmax(0, 1fr); }
.appmenu { grid-row: 1 / 3; display: grid; place-items: center; padding-right: 8px; background: #0063a5; color: #fff; }
.tabs { display: flex; align-items: center; gap: 46px; padding-left: 88px; border-bottom: 1px solid #b9b6c2; font-size: 14px; position: relative; white-space: nowrap; }
.tabs a { line-height: 27px; position: relative; }
.current::after { content: ""; position: absolute; left: -12px; right: -41px; bottom: 0; height: 3px; background: #0063a5; }
.launch { margin-left: auto; margin-right: 2px; width: 223px; height: 24px; display: flex; align-items: center; background: #fff; border: 1px solid #e6e1ec; padding: 0 11px 0 8px; }
.launch input { flex: 1; min-width: 0; border: 0; padding: 0; background: none; }
::placeholder { color: #55535e; font-style: italic; opacity: 1; }
.ribbon { display: grid; grid-template-columns: 62px 551px 475px 425px 252px minmax(0, 1fr); border-bottom: 1px solid #b9b6c2; color: #3a3742; }
.ribbon section { display: flex; height: 100px; border-left: 1px solid #b9b6c2; overflow: hidden; }
.ribbon button { color: #38353f; white-space: nowrap; }
.ribbon .tools { flex-direction: column; gap: 22px; padding: 12px 0 0 8px; border-left: 0; }
.tools button { display: flex; align-items: center; justify-content: space-between; width: 37px; }
.tools button + button .tri { margin-left: 4px; }
.sets { padding-left: 15px; }
.wide-col { width: 175px; padding-top: 5px; display: grid; grid-template-rows: 41px 41px; align-content: start; gap: 8px; }
.wide-col + .wide-col { width: 166px; }
.wide { display: flex; align-items: center; gap: 5px; text-align: left; }
.big { width: 100px; display: flex; flex-direction: column; align-items: center; padding-top: 20px; }
.big svg { width: 44px; height: 44px; margin-bottom: 7px; }
.big.arrow svg { margin-bottom: 4px; }
.sets .big { width: 88px; }
.bars-group { padding-left: 12px; }
.big.narrow { width: 76px; }
.bars-group .big:last-child { width: 96px; }
.pressed { background: #b7b7c5; }
.detail { padding-left: 11px; }
.cuts { justify-content: space-between; padding-right: 17px; padding-left: 16px; }
.cut-list { display: flex; flex-direction: column; }
.cut-list button { display: flex; align-items: center; gap: 6px; height: 25px; }
.cut-list .poly { height: 38px; margin: 7px 0 9px; }
.cut-icons { display: flex; flex-direction: column; align-items: center; gap: 10px; padding-top: 5px; }
.cut-icons button:first-child { align-self: flex-end; }
.ribbon .window { flex-direction: column; }
.mdi { display: flex; justify-content: space-between; padding: 5px 12px 0 25px; }
.window .big { padding-top: 8px; margin-left: 13px; }
.window .big.arrow svg { height: 36px; margin-bottom: 12px; }
.window .tri { margin-top: 2px; }

/* model view */
.work { display: grid; grid-template-columns: minmax(0, 1fr) 475px 45px; min-height: 0; }
.view { overflow: hidden; min-height: 0; background: #cdc7db; }
.model { width: 100%; height: 100%; }
.dim { font-size: 15px; fill: #55505f; }
.level { font: 17px "DejaVu Sans", sans-serif; fill: #0d0d10; }
.axis { font-size: 11px; }

/* property panel */
.panel { border-left: 6px solid #b9b8c6; padding: 0 7px 0 6px; display: grid; grid-template-rows: 46px 31px 32px minmax(0, 1fr) 69px; min-height: 0; color: #32303b; }
.panel > header { display: flex; align-items: center; gap: 12px; height: 40px; color: #55535e; }
.panel h2 { flex: 1; margin-left: -6px; font-size: 14px; font-weight: 700; color: #26242c; }
.row { display: flex; justify-content: space-between; }
.saved { padding: 0 1px 0 2px; gap: 7px; }
.chip { display: grid; place-items: center; background: #b9b8c6; border-radius: 3px; width: 30px; height: 30px; color: #26242c; }
.back i { width: 15px; height: 15px; background: currentColor; clip-path: polygon(0 50%, 100% 0, 100% 100%); }
.save { background: #adabb5; color: #d6d4dc; }
.find { padding-top: 6px; height: 38px; gap: 5px; }
.find .chip { width: 38px; height: 32px; }
.findbox { flex: 1; display: flex; align-items: center; background: #fff; border: 1px solid #e4dfea; padding-right: 11px; }
.findbox input { flex: 1; border: 0; padding: 0; background: none; }
.select { position: relative; display: flex; align-items: center; background: #fff; border: 1px solid #e4dfea; }
.select select { appearance: none; width: 100%; height: 100%; border: 0; padding: 0 24px 0 8px; background: none; }
.select::after { content: ""; position: absolute; right: 6px; top: calc(50% - 3px); width: 11px; height: 6px; background: #26242c; clip-path: polygon(0 0, 100% 0, 50% 100%); pointer-events: none; }
.saved .select { flex: 1; }
.scroll { display: flex; gap: 12px; overflow: hidden; padding-top: 15px; min-height: 0; }
.props { flex: 1; overflow: hidden; padding-top: 13px; }
fieldset { margin: 0 0 10px; padding: 0; border: 0; display: grid; grid-template-columns: minmax(0, 1fr) 249px; gap: 3px 0; font-size: 14px; min-width: 0; }
.inner + fieldset:not(.inner) { margin-top: 12px; }
legend { padding: 0 0 8px 5px; display: flex; align-items: center; gap: 5px; font-weight: 700; line-height: 20px; color: #26242c; }
.inner legend { padding-left: 17px; }
.inner label { padding-left: 13px; }
.fold { width: 12px; height: 10px; background: #26242c; clip-path: polygon(0 0, 100% 0, 50% 100%); }
fieldset input { width: 100%; height: 26px; min-width: 0; border: 1px solid #e4dfea; background: #fff; padding: 0 7px; font-size: 13px; }
fieldset input:disabled { background: #f5f1f9; color: #45424e; border-color: #ebe6f0; }
fieldset .select { font-size: 13px; }
.hook { height: 36px; }
.hook::before { content: ""; position: absolute; left: 8px; top: 18px; width: 19px; height: 3px; background: #26242c; }
.hook select { padding-left: 43px; }
.pair { display: grid; grid-template-columns: 1fr 1fr; gap: 3px; }
.uda { height: 30px; background: #b7b7c5; border-radius: 2px; font-size: 14px; }
.track { width: 8px; height: 560px; max-height: 100%; background: #cfccd8; border-radius: 3px; padding-top: 147px; margin-right: 11px; }
.thumb { height: 348px; background: #4b4954; }
.panel > footer { display: flex; flex-direction: column; align-items: flex-start; padding: 8px 2px 0 1px; }
.panel > footer a { align-self: flex-end; font-size: 14px; line-height: 20px; font-weight: 700; color: #82808b; }
.panel > footer button { margin-top: 3px; width: 67px; height: 31px; font-size: 14px; background: #adabb5; color: #d2d0d8; border-radius: 3px; }
.rail { border-left: 1px solid #b9b6c2; color: #26242c; }
.rail button { width: 100%; height: 36px; display: grid; place-items: center; border-bottom: 1px solid #b9b6c2; }
.rail button:first-child { height: 43px; }
.rail .on { background: #0063a5; color: #fff; }

/* lower toolbars */
.dock { position: relative; display: grid; grid-template-columns: 170px 230px 746px minmax(0, 562px); gap: 3px; align-items: start; padding: 1px 0 0 2px; border-top: 1px solid #b9b6c2; }
.dock section { height: 70px; border: 1px solid #cbc7d3; border-left: 6px solid #cbc7d3; }
.dock select { font-size: 14px; padding: 0 18px 0 5px; }
.dock .select { height: 26px; }
.dock .select::after { right: 7px; top: 8px; height: 8px; width: 11px; }
.dock .origin { display: grid; grid-template-columns: 129px 25px; gap: 3px 6px; justify-content: end; border-left-width: 1px; padding: 3px 2px; }
.origin .select { margin-top: 1px; padding-left: 3px; }
.origin .select select { padding-left: 2px; }
.off { width: 25px; height: 30px; display: grid; place-items: center; background: #adabb5; color: #cfcdd6; }
.origin .off:last-child { margin-left: -4px; }
.dock .finder { display: grid; grid-template-columns: 187px 15px; gap: 12px 11px; align-content: start; align-items: center; padding: 5px 4px; }
.finder input { width: 187px; height: 26px; border: 1px solid #e4dfea; padding: 0 4px; background: #fff; }
.finder .area { justify-self: start; margin-left: 2px; }
.dock .selecting { position: relative; height: 67px; padding: 2px 0 0 2px; }
.strip { display: flex; gap: 2px; align-items: center; }
.strip button { width: 25px; height: 25px; display: grid; place-items: center; }
.strip button svg { width: 16px; height: 16px; }
.strip .on { background: #b9b8c6; }
.strip .blue { color: #2a87c8; }
.strip .gray { color: #55535e; }
.strip .orange { color: #f0892c; }
.rule { width: 2px; height: 30px; background: #cbc7d3; }
.selecting .strip { height: 25px; }
.selecting .strip.second { height: 32px; margin-top: 2px; gap: 5px; }
.second .select { width: 92px; }
.dock .second .select::after { right: 12px; }
.second .rule + button { margin-left: -4px; }
.eye { position: absolute; right: 7px; top: 27px; }
.dock .snapping { height: 71px; padding: 5px 0 0 1px; }
.snapping .strip { height: 26px; }
.snapping .auto { width: 66px; margin-left: 4px; }
.snapping .plane { width: 110px; margin-left: 7px; }
.dock .snapping .auto::after, .dock .snapping .plane::after { right: 12px; }
.snapping .outline { width: 128px; margin: 8px 0 0 4px; }
.dock .snapping .outline::after { right: 13px; }
.badge { position: absolute; right: 40px; top: 2px; width: 248px; height: 79px; z-index: 2; border: 2px solid #26a888; border-radius: 9px; background: rgba(0, 132, 57, .86); color: #fdee2b; font: 700 43px/75px Inter, sans-serif; text-align: center; }

/* status bar */
.status { display: grid; grid-template-columns: 1029px 133px 19px 62px 276px minmax(0, 1fr); align-items: center; background: #0063a5; border-top: 1px solid #2b5f8c; color: #fff; font-size: 18px; line-height: 24px; white-space: nowrap; overflow: hidden; padding-top: 3px; }
```
